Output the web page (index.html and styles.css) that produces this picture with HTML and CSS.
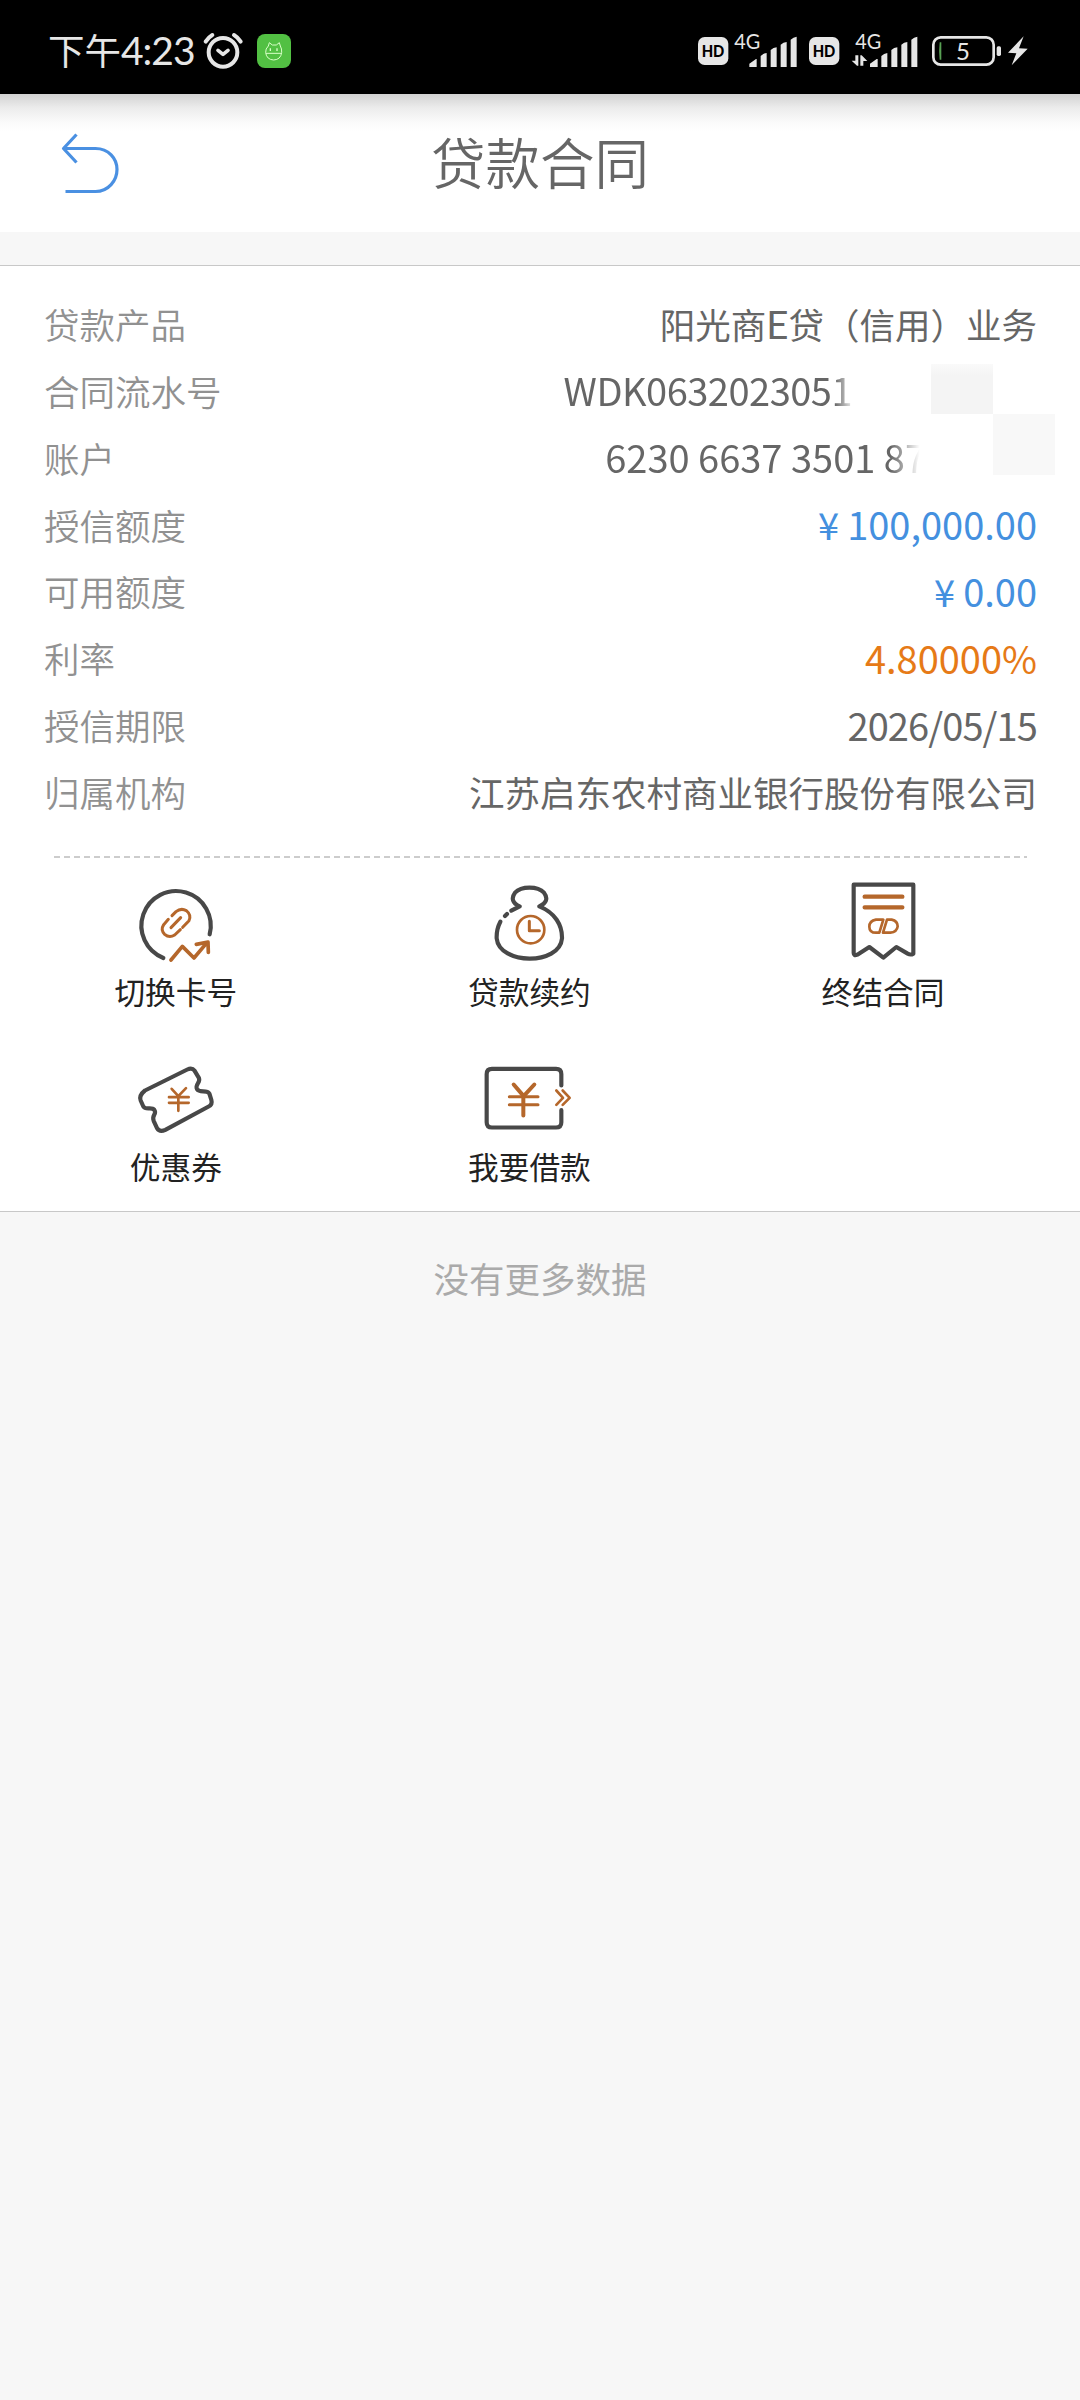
FILE: index.html
```html
<!DOCTYPE html>
<html lang="zh-CN">
<head>
<meta charset="utf-8">
<title>贷款合同</title>
<link rel="stylesheet" href="styles.css">
</head>
<body>
<div class="status">
  <div class="status-side">
    <span class="time">下午<span class="clock">4:23</span></span>
    <svg class="alarm" width="40" height="40" viewBox="607 93 120 120" fill="none" stroke="#e6e6e6" stroke-width="12" stroke-linecap="round">
      <circle cx="667" cy="157" r="43"/><path d="M652 151l15 12 15-12" stroke-width="11" stroke-linejoin="round"/>
      <path d="M615 125q8-13 20-20M720 125q-8-13-20-20"/>
    </svg>
    <svg class="pet" width="34" height="34" viewBox="0 0 102 102">
      <rect width="102" height="102" rx="24" fill="#52c043"/>
      <g fill="none" stroke="#d9ffc8" stroke-width="3"><path d="M34 36l3-10 9 7h12l9-7 3 10q5 8 4 20-3 21-24 22-21-1-24-22-1-12 8-20zM27 58h46"/><path d="M40 43v8M60 43v8" stroke-width="4"/></g>
    </svg>
  </div>
  <div class="status-side">
    <svg width="30" height="50" viewBox="54 78 90 150"><rect x="54" y="111" width="91" height="84" rx="20" fill="#e6e6e6"/><text class="hd" x="99" y="170" textLength="68" lengthAdjust="spacingAndGlyphs">HD</text></svg>
    <svg class="sig-a" width="63" height="50" viewBox="162 78 189 150"><text class="net" x="163" y="147" textLength="78" lengthAdjust="spacingAndGlyphs">4G</text><path class="solid" d="M208 201v-10l20-14h2v24zM242 201v-33q8-8 18-9v42zM272 201v-51q8-7 18-8v59zM302 201v-67q8-7 18-8v75zM332 201v-82q8-8 18-9v91z"/></svg>
    <svg class="hd-b" width="30" height="50" viewBox="387 78 90 150"><rect x="387" y="111" width="91" height="84" rx="20" fill="#e6e6e6"/><text class="hd" x="432" y="170" textLength="68" lengthAdjust="spacingAndGlyphs">HD</text></svg>
    <svg class="sig-b" width="67" height="50" viewBox="513 78 201 150"><text class="net" x="526" y="147" textLength="78" lengthAdjust="spacingAndGlyphs">4G</text><path class="solid" d="M526 166h9v31h-4l-16-15h11zM541 197v-31h4l17 17h-12v14zM570 201v-10l20-14h3v24zM604 201v-33q8-8 18-9v42zM634 201v-51q8-7 18-8v59zM664 201v-67q8-7 18-8v75zM694 201v-82q8-8 18-9v91z"/></svg>
    <svg class="battery" width="96" height="50" viewBox="756 78 288 150"><rect x="760" y="112" width="181" height="82" rx="22" fill="none" stroke="#e6e6e6" stroke-width="8"/><path d="M779 127q-3 26 0 52h5v-52z" fill="#58a154"/><text class="level" x="849" y="180">5</text><rect x="950" y="139" width="13" height="29" rx="5" fill="#e6e6e6"/><path class="solid" d="M1031 109l-47 49 25 2-14 36 48-50-26-1z"/></svg>
  </div>
</div>
<header class="header">
  <svg class="back" width="64" height="68" viewBox="58.500 128.500 64 68" fill="none" stroke="#4a90e2" stroke-width="3.2" stroke-linejoin="round"><path d="M77 134L64 148 77 162M65 148h31c13 0 21.500 10 21.500 21s-8.500 22-21.500 22H66"/></svg>
  <h1 class="title">贷款合同</h1>
</header>
<main class="card">
  <dl class="rows">
    <div class="row"><dt>贷款产品</dt><dd>阳光商<span class="latin">E</span>贷（信用）业务</dd></div>
    <div class="row"><dt>合同流水号</dt><dd class="num serial">WDK0632023051</dd></div>
    <div class="row"><dt>账户</dt><dd class="num account">6230 6637 3501 87</dd></div>
    <div class="row"><dt>授信额度</dt><dd class="num blue"><span class="yen">¥</span>100,000.00</dd></div>
    <div class="row"><dt>可用额度</dt><dd class="num blue"><span class="yen">¥</span>0.00</dd></div>
    <div class="row"><dt>利率</dt><dd class="num orange">4.80000%</dd></div>
    <div class="row"><dt>授信期限</dt><dd class="num date">2026/05/15</dd></div>
    <div class="row"><dt>归属机构</dt><dd>江苏启东农村商业银行股份有限公司</dd></div>
  </dl>
  <div class="patch patch-a"></div>
  <div class="patch patch-b"></div>
  <div class="dash"></div>
  <nav class="actions">
    <div class="action">
      <svg width="100" height="82" viewBox="108 60 300 246"><path class="ink" d="M220 294A104 104 0 1 1 359 223"/><g class="gold" stroke-width="9"><path d="M246 167l12-12q15-12 31-3 16 13 8 30l-19 20M235 178l-14 16q-10 16 3 29 14 12 30 2l17-16M243 203l29-30"/><path d="M243 300l34-41 35 35 37-44M319 253l35-7 1 31" stroke-width="11"/></g></svg>
      <span>切换卡号</span>
    </div>
    <div class="action">
      <svg width="100" height="82" viewBox="119 60 300 246"><path class="ink" d="M216 152l25-13c-22-9-26-25-14-41 19-20 68-20 87 0 13 17 7 32-14 41 47 19 69 56 68 96-7 82-188 80-196 0q-1-27 11-50M197 168l6-6"/><g class="gold"><circle cx="274" cy="209" r="41" stroke-width="8"/><path d="M270 184v28h30" stroke-width="9"/></g></svg>
      <span>贷款续约</span>
    </div>
    <div class="action">
      <svg width="100" height="82" viewBox="101 60 300 246"><path class="ink" d="M163 74h179v207q-8 5-17 0l-34-20-39 32-42-32-36 23q-11 5-11-5z"/><g class="gold"><path d="M196 110h113M196 142h113" stroke-width="13"/><path d="M252 179h-22q-20 4-20 21 0 18 20 18h10zM263 179h14q18 4 18 20-2 17-22 19h-22z" stroke-width="8"/></g></svg>
      <span>终结合同</span>
    </div>
    <div class="action">
      <svg width="100" height="82" viewBox="108 586.500 300 246"><path class="ink" d="M165 693l127-63q14-7 22 4l13 22c5 14-13 18-6 33 8 13 29 0 37 13l6 19q4 14-8 20l-130 70q-17 8-25-5l-10-22c-7-18 11-20 2-33-8-10-26 2-33-10l-8-18q-6-15 13-30z"/><path class="gold" d="M245 688l20 22 23-24M265 710v44M237 713h59M237 730h59" stroke-width="8"/></svg>
      <span>优惠券</span>
    </div>
    <div class="action">
      <svg width="100" height="82" viewBox="119 586.500 300 246"><path class="ink" d="M366 678v-34q0-16-16-16H158q-16 0-16 16v144q0 16 16 16h192q16 0 16-16v-36"/><g class="gold"><path d="M223 675l30 35 32-35M252 710v58" stroke-width="12"/><path d="M210 712h86M210 736h86" stroke-width="9"/><path d="M351 693l20 22-20 21M370 693l21 22-21 21" stroke-width="8"/></g></svg>
      <span>我要借款</span>
    </div>
  </nav>
</main>
<p class="end">没有更多数据</p>
</body>
</html>
```
FILE: styles.css
```css
* { box-sizing: border-box; }
body {
  margin: 0;
  min-height: 2400px;
  background: #f7f7f7;
  color: #666;
  font-family: "Noto Sans CJK SC", sans-serif;
  font-size: 35.5px;
}
.status {
  height: 94px;
  padding: 8px 52px 0 48px;
  background: #000;
  color: #e6e6e6;
  display: flex;
  justify-content: space-between;
  align-items: center;
}
.status-side { display: flex; align-items: center; }
.status svg { overflow: visible; }
.time { font-size: 36.5px; line-height: 40px; padding-bottom: 2px; white-space: nowrap; }
.clock { font-family: Lato, sans-serif; font-size: 39px; letter-spacing: -1px; }
.alarm { margin-left: 8px; }
.pet { margin-left: 14px; }
.sig-a { margin-left: 6px; }
.hd-b { margin-left: 12px; }
.sig-b { margin-left: 12px; }
.battery { margin-left: 14px; }
.hd { font: 900 51px Lato, sans-serif; text-anchor: middle; fill: #000; }
.net { font: 61px Lato, sans-serif; fill: #e6e6e6; }
.level { font: 72px Lato, sans-serif; text-anchor: middle; fill: #e6e6e6; }
.solid { fill: #e6e6e6; }
.header {
  height: 138px;
  padding: 0 58px;
  background: linear-gradient(#d2d2d2, #ececec 14px, #fafafa 28px, #fff 38px);
  display: grid;
  grid-template-columns: 64px 1fr 64px;
  align-items: center;
}
.title {
  margin: 0;
  padding-bottom: 5px;
  font-size: 54.5px;
  font-weight: 350;
  line-height: 80px;
  text-align: center;
}
.card {
  position: relative;
  height: 947px;
  margin-top: 33px;
  border-top: 1px solid #c8c8c8;
  border-bottom: 1px solid #c8c8c8;
  background: #fff;
}
.rows { margin: 0; padding: 24.5px 43px 0 44px; }
.row {
  height: 66.86px;
  display: flex;
  justify-content: space-between;
  align-items: center;
  line-height: 50px;
  white-space: nowrap;
}
.row dt { color: #919191; font-weight: 350; }
.row dd { margin: 0; }
.latin { font-family: Lato, sans-serif; font-size: 38.5px; }
.num { font-size: 38px; padding-bottom: 1px; }
.blue { color: #4490df; }
.orange { color: #e67a17; }
.yen { margin-right: 8px; }
.serial { letter-spacing: -0.5px; }
.date { letter-spacing: -0.9px; }
.serial { -webkit-mask-image: linear-gradient(90deg, #000 94%, transparent 101%); }
.account { -webkit-mask-image: linear-gradient(90deg, #000 89%, transparent 98%); }
.row .serial { margin-right: 185px; }
.row .account { margin-right: 111px; }
.patch { position: absolute; width: 62px; }
.patch-a { left: 931px; top: 98px; height: 50px; background: linear-gradient(#fafafa, #f4f4f4 12px); }
.patch-b { left: 993px; top: 148px; height: 61px; background: #f8f8f8; }
.dash {
  height: 2px;
  margin: 30.5px 53px 0 54px;
  background: repeating-linear-gradient(90deg, #ccc 0 6px, transparent 6px 10px);
}
.actions {
  margin: 22px 0 0 -1px;
  display: grid;
  grid-template-columns: repeat(3, 353.6px);
  grid-auto-rows: 175.5px;
}
.action {
  display: flex;
  flex-direction: column;
  align-items: center;
  gap: 6px;
  color: #222;
  font-size: 30.7px;
  line-height: 46px;
}
.ink { fill: none; stroke: #484848; stroke-width: 12.5; stroke-linecap: round; stroke-linejoin: round; }
.gold { fill: none; stroke: #b5672b; stroke-linecap: round; stroke-linejoin: round; }
.end { margin: 40px 0 0; color: #aaa; text-align: center; line-height: 52px; }
```
